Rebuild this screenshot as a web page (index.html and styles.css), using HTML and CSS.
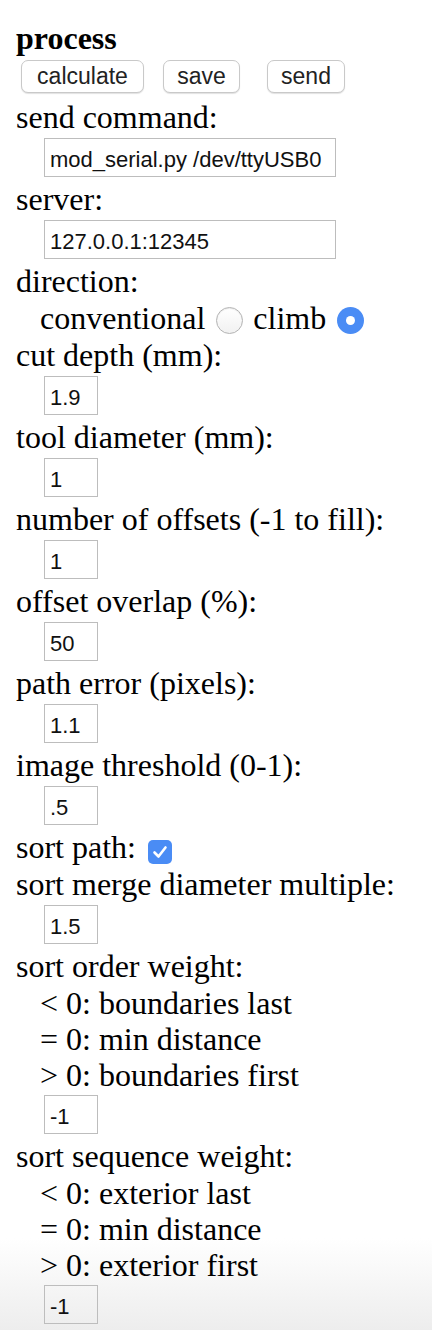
FILE: index.html
```html
<!DOCTYPE html>
<html>
<head>
<meta charset="utf-8">
<title>process</title>
<link rel="stylesheet" href="styles.css">
</head>
<body>
<div class="panel">
  <div class="row title">process</div>
  <div class="buttons">
    <button class="btn btn-calc">calculate</button><button class="btn btn-save">save</button><button class="btn btn-send">send</button>
  </div>

  <div class="row">send command:</div>
  <div class="field"><input class="box wide" type="text" value="mod_serial.py /dev/ttyUSB0"></div>

  <div class="row">server:</div>
  <div class="field"><input class="box wide" type="text" value="127.0.0.1:12345"></div>

  <div class="row">direction:</div>
  <div class="row indent">conventional <span class="radio"></span> climb <span class="radio on"></span></div>

  <div class="row">cut depth (mm):</div>
  <div class="field"><input class="box num" type="text" value="1.9"></div>

  <div class="row">tool diameter (mm):</div>
  <div class="field"><input class="box num" type="text" value="1"></div>

  <div class="row">number of offsets (-1 to fill):</div>
  <div class="field"><input class="box num" type="text" value="1"></div>

  <div class="row">offset overlap (%):</div>
  <div class="field"><input class="box num" type="text" value="50"></div>

  <div class="row">path error (pixels):</div>
  <div class="field"><input class="box num" type="text" value="1.1"></div>

  <div class="row">image threshold (0-1):</div>
  <div class="field"><input class="box num" type="text" value=".5"></div>

  <div class="row">sort path: <span class="check"><svg viewBox="0 0 24 24" width="24" height="24"><path d="M6.5 12.5 L10.5 16.5 L17.5 7.5" fill="none" stroke="#fff" stroke-width="2.6" stroke-linecap="round" stroke-linejoin="round"/></svg></span></div>

  <div class="row">sort merge diameter multiple:</div>
  <div class="field"><input class="box num" type="text" value="1.5"></div>

  <div class="row">sort order weight:</div>
  <div class="row indent note">&lt; 0: boundaries last</div>
  <div class="row indent note">= 0: min distance</div>
  <div class="row indent note">&gt; 0: boundaries first</div>
  <div class="field"><input class="box num" type="text" value="-1"></div>

  <div class="row">sort sequence weight:</div>
  <div class="row indent note">&lt; 0: exterior last</div>
  <div class="row indent note">= 0: min distance</div>
  <div class="row indent note">&gt; 0: exterior first</div>
  <div class="field"><input class="box num" type="text" value="-1"></div>
</div>
</body>
</html>
```

FILE: styles.css
```css
html {
  margin: 0;
  padding: 0;
  min-height: 1330px;
  background: linear-gradient(to bottom, #ffffff 0, #ffffff 1238px, #ededed 1330px);
}

body {
  margin: 0;
  padding: 0;
  font-family: "Liberation Serif", "Times New Roman", serif;
  font-size: 32px;
  color: #000;
  overflow: hidden;
}

.panel {
  padding: 20px 0 0 16px;
}

.row {
  line-height: 37px;
  white-space: nowrap;
}

.note {
  line-height: 36px;
}

.title {
  font-weight: bold;
}

.indent {
  padding-left: 24px;
}

.buttons {
  height: 42px;
  display: flex;
  align-items: flex-start;
  padding-top: 3px;
  box-sizing: border-box;
}

.btn {
  box-sizing: border-box;
  height: 33px;
  padding: 0;
  background: #ffffff;
  border: 1px solid #c9c9c9;
  border-radius: 7px;
  box-shadow: 0 1px 1px rgba(0, 0, 0, 0.12);
  font-family: "Liberation Sans", Arial, sans-serif;
  font-size: 23px;
  color: #222;
  line-height: 31px;
  text-align: center;
}

.btn-calc { width: 123px; margin-left: 5px; }
.btn-save { width: 77px; margin-left: 19px; }
.btn-send { width: 78px; margin-left: 27px; }

.field {
  height: 45px;
  padding: 2px 0 0 28px;
  box-sizing: border-box;
}

.box {
  box-sizing: border-box;
  height: 39px;
  margin: 0;
  padding: 5px 7px 0 5px;
  border: 1px solid #bdbdbd;
  border-radius: 0;
  background: transparent;
  font-family: "Liberation Sans", Arial, sans-serif;
  font-size: 22px;
  color: #111;
  outline: none;
}

.wide { width: 292px; }
.num { width: 54px; }

.radio {
  display: inline-block;
  box-sizing: border-box;
  width: 27px;
  height: 27px;
  margin: 0 2px 0 3px;
  border-radius: 50%;
  border: 1px solid #b3b3b3;
  background: linear-gradient(#ffffff, #f1f1f1);
  box-shadow: inset 0 1px 1px rgba(0, 0, 0, 0.08);
  vertical-align: -5px;
  position: relative;
}

.radio.on {
  border: none;
  background: #4a8cf5;
  box-shadow: none;
}

.radio.on::after {
  content: "";
  position: absolute;
  left: 9px;
  top: 9px;
  width: 9px;
  height: 9px;
  border-radius: 50%;
  background: #fff;
}

.check {
  display: inline-block;
  width: 24px;
  height: 24px;
  margin-left: 4px;
  border-radius: 5px;
  background: #4a8cf5;
  vertical-align: -6px;
}

.check svg {
  display: block;
}
```
